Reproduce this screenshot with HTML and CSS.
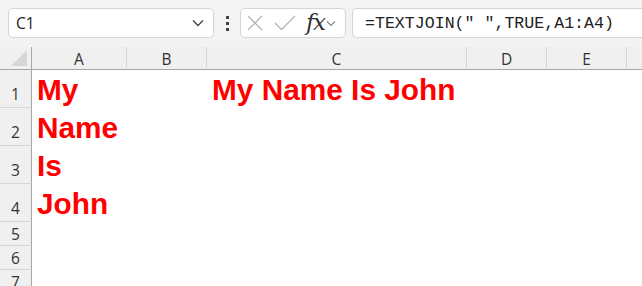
FILE: index.html
```html
<!DOCTYPE html>
<html lang="en">
<head>
  <meta charset="UTF-8" />
  <title>TEXTJOIN - Sheet</title>
  <link rel="stylesheet" href="styles.css">
</head>
<body>
  <div class="toolbar">
    <div class="name-box">
      <span>C1</span>
      <svg class="chev" width="12" height="8" viewBox="0 0 12 8"><path d="M1 1.5 L6 6.5 L11 1.5" fill="none" stroke="#444" stroke-width="1.4"/></svg>
    </div>
    <div class="dots"><i></i><i></i><i></i></div>
    <div class="fx-box">
      <svg width="18" height="18" viewBox="0 0 18 18"><path d="M2 2 L16 16 M16 2 L2 16" stroke="#b5b5b5" stroke-width="1.3" fill="none"/></svg>
      <svg width="22" height="16" viewBox="0 0 22 16"><path d="M1 8 L7.5 14.5 L21 1" stroke="#b5b5b5" stroke-width="1.3" fill="none"/></svg>
      <span class="fx">fx</span>
      <svg width="10" height="7" viewBox="0 0 10 7"><path d="M1 1.5 L5 5.5 L9 1.5" fill="none" stroke="#888" stroke-width="1.2"/></svg>
    </div>
    <div class="formula">=TEXTJOIN(" ",TRUE,A1:A4)</div>
  </div>

  <div class="sheet">
    <div class="corner"><span class="tri"></span></div>
    <div class="col-hdr">A</div>
    <div class="col-hdr">B</div>
    <div class="col-hdr">C</div>
    <div class="col-hdr">D</div>
    <div class="col-hdr">E</div>
    <div class="col-hdr last"></div>

    <div class="row-hdr tall">1</div>
    <div class="cell tall red">My</div>
    <div class="cell tall"></div>
    <div class="cell tall red">My Name Is John</div>
    <div class="cell tall"></div>
    <div class="cell tall"></div>
    <div class="cell tall"></div>

    <div class="row-hdr tall">2</div>
    <div class="cell tall red">Name</div>
    <div class="cell tall"></div>
    <div class="cell tall"></div>
    <div class="cell tall"></div>
    <div class="cell tall"></div>
    <div class="cell tall"></div>

    <div class="row-hdr tall">3</div>
    <div class="cell tall red">Is</div>
    <div class="cell tall"></div>
    <div class="cell tall"></div>
    <div class="cell tall"></div>
    <div class="cell tall"></div>
    <div class="cell tall"></div>

    <div class="row-hdr tall">4</div>
    <div class="cell tall red">John</div>
    <div class="cell tall"></div>
    <div class="cell tall"></div>
    <div class="cell tall"></div>
    <div class="cell tall"></div>
    <div class="cell tall"></div>

    <div class="row-hdr">5</div>
    <div class="cell"></div><div class="cell"></div><div class="cell"></div><div class="cell"></div><div class="cell"></div><div class="cell"></div>

    <div class="row-hdr">6</div>
    <div class="cell"></div><div class="cell"></div><div class="cell"></div><div class="cell"></div><div class="cell"></div><div class="cell"></div>

    <div class="row-hdr">7</div>
    <div class="cell"></div><div class="cell"></div><div class="cell"></div><div class="cell"></div><div class="cell"></div><div class="cell"></div>
  </div>
</body>
</html>
```

FILE: styles.css
```css
* {
  box-sizing: border-box;
}

body {
  margin: 0;
  background-color: #fff;
  font-family: 'Open Sans', 'Noto Sans', sans-serif;
  color: #333;
  overflow: hidden;
}

.toolbar {
  height: 47px;
  background-color: #f3f3f3;
  display: flex;
  align-items: center;
  padding: 1px 0 2px 8px;
}

.name-box {
  width: 206px;
  height: 30px;
  background-color: #fff;
  border: 1px solid #d4d4d4;
  border-radius: 5px;
  display: flex;
  align-items: center;
  justify-content: space-between;
  padding: 0 9px 0 7px;
  font-size: 15.5px;
  color: #222;
}

.dots {
  width: 26px;
  display: flex;
  flex-direction: column;
  align-items: center;
  gap: 3px;
}

.dots i {
  width: 3px;
  height: 3px;
  background-color: #444;
}

.fx-box {
  width: 106px;
  height: 30px;
  background-color: #fff;
  border: 1px solid #d4d4d4;
  border-radius: 5px;
  display: flex;
  align-items: center;
  padding: 0 4px 0 5px;
  gap: 10px;
}

.fx {
  font-family: 'DejaVu Serif', 'Liberation Serif', serif;
  font-style: italic;
  font-size: 23px;
  color: #333;
  margin-right: -8px;
  letter-spacing: -1.5px;
  line-height: 1;
  padding-bottom: 2px;
}

.formula {
  flex: 1;
  height: 30px;
  margin-left: 6px;
  background-color: #fff;
  border: 1px solid #d4d4d4;
  border-right: none;
  border-radius: 5px 0 0 5px;
  display: flex;
  align-items: center;
  padding-left: 12px;
  font-family: 'Liberation Mono', 'DejaVu Sans Mono', monospace;
  font-size: 16.6px;
  color: #222;
}

.sheet {
  display: grid;
  grid-template-columns: 32px 95px 80px 260px 80px 80px 1fr;
  grid-template-rows: 23px 38px 38px 38px 38px 24px 24px 24px;
}

.corner {
  background-color: #f0f0f0;
  border-right: 1px solid #a6a6a6;
  border-bottom: 1px solid #a6a6a6;
  position: relative;
}

.tri {
  position: absolute;
  right: 4px;
  bottom: 3px;
  width: 0;
  height: 0;
  border-left: 16px solid transparent;
  border-bottom: 16px solid #d6d6d6;
}

.col-hdr {
  background-color: #f0f0f0;
  border-right: 1px solid #d6d6d6;
  border-bottom: 1px solid #a6a6a6;
  display: flex;
  align-items: center;
  justify-content: center;
  font-size: 15.5px;
  color: #333;
  padding-top: 1px;
}

.col-hdr.last {
  border-right: none;
}

.row-hdr {
  background-color: #f0f0f0;
  border-right: 1px solid #a6a6a6;
  border-bottom: 1px solid #d6d6d6;
  display: flex;
  align-items: center;
  justify-content: center;
  font-size: 15.5px;
  color: #333;
}

.row-hdr.tall {
  align-items: flex-end;
  padding-bottom: 2px;
}

.cell {
  display: flex;
  align-items: flex-end;
  padding: 0 0 0 5px;
  white-space: nowrap;
  overflow: visible;
}

.red {
  font-family: 'Liberation Sans', Arial, sans-serif;
  font-weight: bold;
  font-size: 29.8px;
  color: #ff0000;
  line-height: 36px;
}
```
